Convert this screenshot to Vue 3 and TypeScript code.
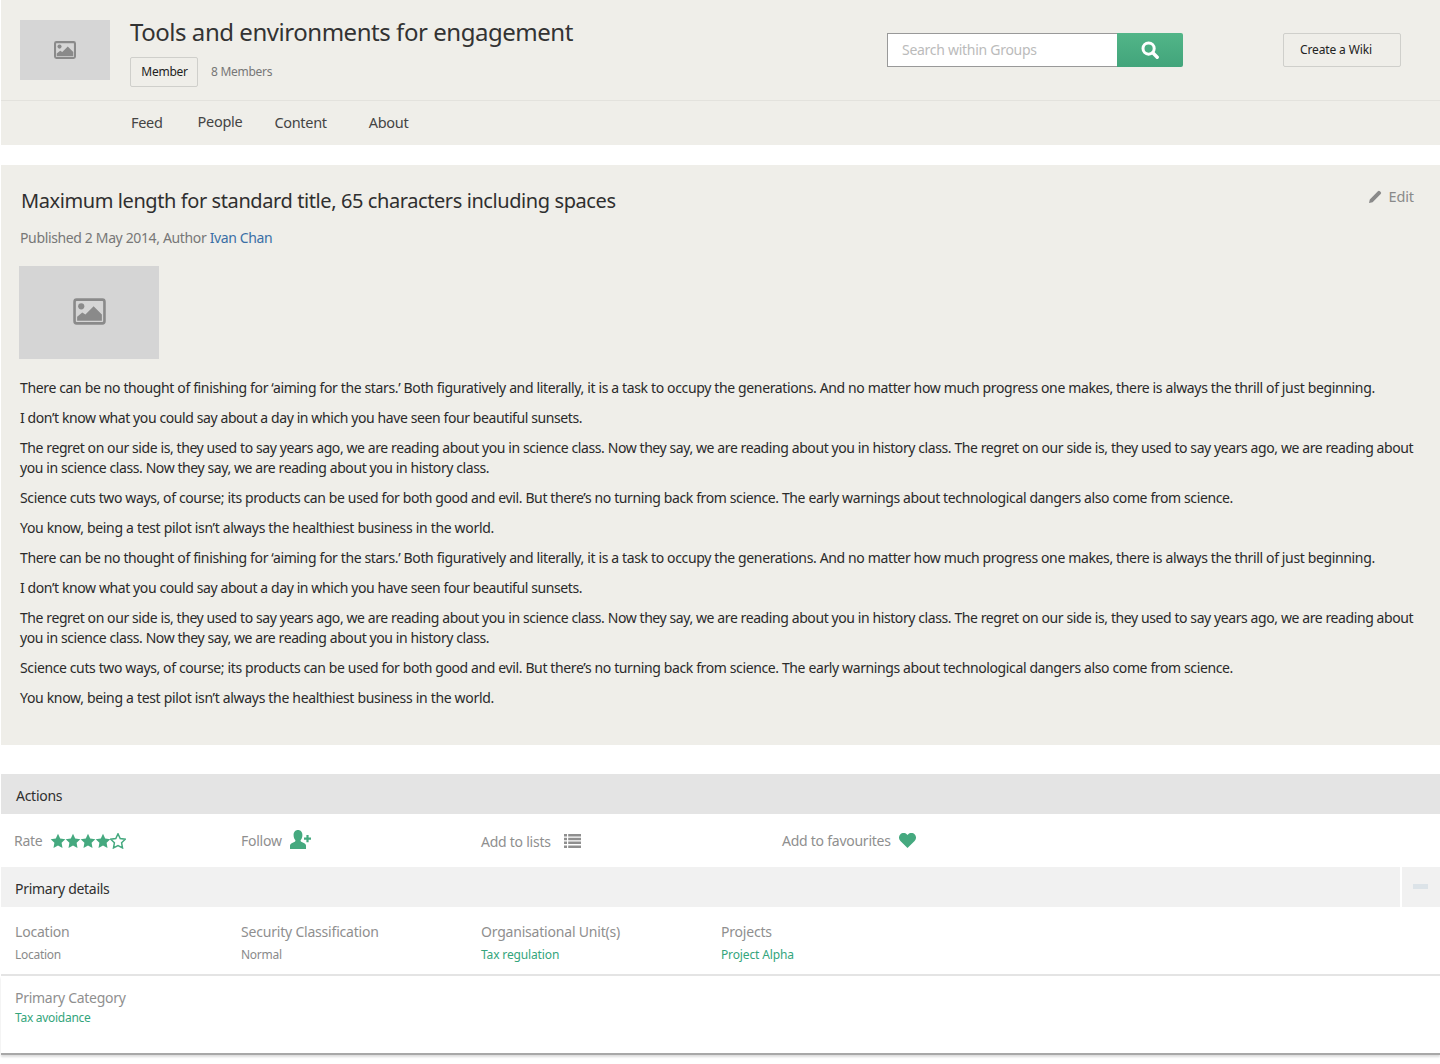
<script setup lang="ts">
const paras: string[] = [
  'There can be no thought of finishing for ‘aiming for the stars.’ Both figuratively and literally, it is a task to occupy the generations. And no matter how much progress one makes, there is always the thrill of just beginning.',
  'I don’t know what you could say about a day in which you have seen four beautiful sunsets.',
  'The regret on our side is, they used to say years ago, we are reading about you in science class. Now they say, we are reading about you in history class. The regret on our side is, they used to say years ago, we are reading about you in science class. Now they say, we are reading about you in history class.',
  'Science cuts two ways, of course; its products can be used for both good and evil. But there’s no turning back from science. The early warnings about technological dangers also come from science.',
  'You know, being a test pilot isn’t always the healthiest business in the world.',
]
const body = [...paras, ...paras]
const starPath = 'M8 .8l2.2 4.7 5.1.7-3.7 3.6.9 5.1L8 12.5l-4.5 2.4.9-5.1L.7 6.2l5.1-.7z'
</script>

<template>
  <div class="page">
    <header class="group-head">
      <div class="head-top">
        <div class="thumb">
          <svg width="22" height="18" viewBox="0 0 32 26"><rect x="1.5" y="1.5" width="29" height="23" rx="2" fill="none" stroke="#8a8a8a" stroke-width="3" /><circle cx="8" cy="8" r="3" fill="#8a8a8a" /><path d="M4 22v-4l5-4 3 2 8-8 8 8v6z" fill="#8a8a8a" /></svg>
        </div>
        <div class="head-title">
          <h1>Tools and environments for engagement</h1>
          <div class="member-row">
            <button class="btn member">Member</button>
            <span class="count">8 Members</span>
          </div>
        </div>
        <div class="search">
          <input class="search-input" placeholder="Search within Groups" />
          <button class="search-btn" aria-label="Search">
            <svg width="18" height="18" viewBox="0 0 18 18"><circle cx="7.6" cy="7.6" r="5.6" fill="none" stroke="#fff" stroke-width="3" /><path d="M11.8 11.8l4.4 4.4" stroke="#fff" stroke-width="3.4" stroke-linecap="round" /></svg>
          </button>
        </div>
        <button class="btn wiki">Create a Wiki</button>
      </div>
      <nav class="tabs">
        <a class="tab t-feed">Feed</a>
        <a class="tab t-people">People</a>
        <a class="tab t-content">Content</a>
        <a class="tab t-about">About</a>
      </nav>
    </header>

    <article class="article">
      <div class="article-head">
        <h2>Maximum length for standard title, 65 characters including spaces</h2>
        <a class="edit">
          <svg width="13" height="13" viewBox="0 0 13 13"><path d="M0 13l.8-3.6L8.9 1.300a1.400 1.400 0 0 1 2 0l.8.8a1.400 1.400 0 0 1 0 2L3.600 12.200z" fill="#8a8a8a" /></svg>
          Edit
        </a>
      </div>
      <p class="byline">Published 2 May 2014, Author <a>Ivan Chan</a></p>
      <div class="hero">
        <svg width="33" height="27" viewBox="0 0 32 26"><rect x="1.500" y="1.500" width="29" height="23" rx="2" fill="none" stroke="#8a8a8a" stroke-width="2.500" /><circle cx="8" cy="8" r="3" fill="#8a8a8a" /><path d="M4 22v-4l5-4 3 2 8-8 8 8v6z" fill="#8a8a8a" /></svg>
      </div>
      <p v-for="(p, i) in body" :key="i" class="para" :class="'p' + (i % 5)">{{ p }}</p>
    </article>

    <section class="bar actions-bar">Actions</section>
    <section class="actions">
      <div class="action a-rate">
        <span>Rate</span>
        <span class="stars">
          <svg v-for="n in 4" :key="n" width="16" height="16" viewBox="0 0 16 16"><path :d="starPath" fill="#45a97f" /></svg>
          <svg width="16" height="16" viewBox="0 0 16 16"><path :d="starPath" fill="none" stroke="#45a97f" stroke-width="1.500" /></svg>
        </span>
      </div>
      <div class="action a-follow">
        <span>Follow</span>
        <svg class="up" width="21" height="19" viewBox="0 0 21 19"><path d="M0 19v-3.500c0-1.800 2.800-2.700 4.800-3.700.8-.4.800-1.300.3-2C4.200 8.600 3.600 7 3.600 5.200 3.600 2.200 5.200 0 8 0s4.400 2.200 4.400 5.200c0 1.800-.6 3.400-1.500 4.600-.5.700-.5 1.600.3 2 2 1 4.800 1.900 4.800 3.700V19z" fill="#45a97f" /><path d="M14 7.500h7v2.200h-7zM16.400 5h2.200v7.200h-2.200z" fill="#45a97f" /></svg>
      </div>
      <div class="action a-lists">
        <span>Add to lists</span>
        <svg width="17" height="14" viewBox="0 0 17 14"><path d="M0 0h3v2.500H0zM4.200 0H17v2.500H4.200zM0 3.800h3v2.500H0zM4.200 3.800H17v2.500H4.200zM0 7.600h3v2.500H0zM4.200 7.600H17v2.500H4.200zM0 11.400h3V14H0zM4.200 11.400H17V14H4.200z" fill="#8f8f8f" /></svg>
      </div>
      <div class="action a-fav">
        <span>Add to favourites</span>
        <svg class="heart" width="17" height="15" viewBox="0 0 17 15"><path d="M8.500 15L1.400 8C-.4 6.200-.5 3.300 1.200 1.500 3-.4 6.100-.4 8 1.400l.5.500.5-.5c1.900-1.800 5-1.800 6.800.1 1.700 1.800 1.600 4.700-.2 6.500z" fill="#45a97f" /></svg>
      </div>
    </section>

    <section class="bar details-bar">
      <span>Primary details</span>
      <div class="collapse"><i></i></div>
    </section>
    <section class="details">
      <div class="detail"><h4>Location</h4><p>Location</p></div>
      <div class="detail"><h4>Security Classification</h4><p>Normal</p></div>
      <div class="detail"><h4>Organisational Unit(s)</h4><a>Tax regulation</a></div>
      <div class="detail"><h4>Projects</h4><a>Project Alpha</a></div>
    </section>
    <section class="category">
      <h4>Primary Category</h4>
      <a>Tax avoidance</a>
    </section>
  </div>
</template>

<style>
html, body { margin: 0; background: #fff; }
</style>

<style scoped>
.page {
  height: 1064px;
  overflow: hidden;
  padding-left: 1px;
  box-sizing: border-box;
  font-family: "Noto Sans", "Open Sans", sans-serif;
  font-size: 14px;
  letter-spacing: -0.36px;
  color: #2f2f2f;
  background: #fff;
}
h1, h2, h4, p { margin: 0; font-weight: 400; }
.group-head { height: 145px; background: #efeee9; }
.head-top {
  height: 100px;
  display: flex;
  border-bottom: 1px solid #e3e2dd;
  box-sizing: content-box;
}
.thumb {
  width: 90px;
  height: 60px;
  margin: 20px 20px 0 19px;
  background: #d6d6d6;
  display: flex;
  align-items: center;
  justify-content: center;
}
.head-title { width: 757px; }
h1 { font-size: 24px; line-height: 34px; margin-top: 15px; letter-spacing: -0.46px; color: #333; }
.member-row { display: flex; align-items: center; margin-top: 8px; }
.btn {
  font: inherit;
  font-size: 12px;
  letter-spacing: -0.28px;
  background: #efeee9;
  color: #222;
  border: 1px solid #cfcfcb;
  border-radius: 2px;
  padding: 0;
}
.member { width: 68px; height: 30px; padding: 0 0 2px 1px; }
.count { font-size: 12px; letter-spacing: -0.28px; color: #777; margin: -2px 0 0 13px; }
.search { display: flex; width: 296px; height: 34px; margin-top: 33px; }
.search-input {
  width: 230px;
  box-sizing: border-box;
  border: 1px solid #999;
  border-right: none;
  padding: 0 14px 2px;
  font: inherit;
  letter-spacing: -0.28px;
  background: #fff;
  outline: none;
}
.search-input::placeholder { color: #bbb; opacity: 1; }
.search-btn {
  width: 66px;
  border: none;
  padding: 0;
  background: linear-gradient(#52b588, #42a47b);
  border-radius: 0 2px 2px 0;
  display: flex;
  align-items: center;
  justify-content: center;
}
.wiki { width: 118px; height: 34px; margin: 33px 0 0 100px; padding: 0 0 2px 16px; text-align: left; letter-spacing: -0.13px; }
.tabs { height: 44px; padding-bottom: 2px; box-sizing: border-box; display: flex; align-items: center; padding-left: 130px; font-size: 14.5px; letter-spacing: -0.3px; color: #444; }
.tab { display: block; }
.t-people { margin-left: 35px; margin-top: -2px; }
.t-content { margin-left: 32px; }
.t-about { margin-left: 42px; }
.article {
  margin-top: 20px;
  height: 580px;
  background: #efeee9;
  padding: 0 19px;
  box-sizing: border-box;
}
.article-head { display: flex; justify-content: space-between; padding-top: 20px; height: 46px; box-sizing: content-box; }
h2 { font-size: 20px; line-height: 32px; color: #2f2f2f; letter-spacing: -0.41px; margin-left: 1px; }
.edit { display: flex; align-items: center; gap: 6px; height: 24px; margin: -1px 7px 0 0; color: #8a8a8a; font-size: 14.5px; letter-spacing: -0.1px; }
.byline { color: #777; line-height: 20px; margin-top: -3px; }
.byline a { color: #3a6ea5; }
.hero {
  width: 140px;
  height: 93px;
  margin: 18px 0 19px -1px;
  padding-bottom: 2px;
  box-sizing: border-box;
  background: #d5d5d5;
  display: flex;
  align-items: center;
  justify-content: center;
}
.para { line-height: 20px; margin-bottom: 10px; color: #2a2a2a; }
.p1 { letter-spacing: -0.4px; }
.p2 { letter-spacing: -0.409px; }
.p3 { letter-spacing: -0.38px; }
.p4 { letter-spacing: -0.32px; }
.bar { display: flex; align-items: center; height: 40px; letter-spacing: -0.28px; }
.actions-bar { margin-top: 29px; background: #e4e4e4; padding: 2px 0 0 15px; box-sizing: border-box; color: #2f2f2f; }
.actions { height: 53px; display: flex; color: #8f8f8f; letter-spacing: -0.25px; }
.action { display: flex; align-items: center; gap: 8px; }
.up { margin-top: -3px; }
.heart { margin-top: -1px; }
.a-rate { width: 227px; margin-left: 13px; gap: 7px; }
.stars { display: flex; }
.stars svg { margin-right: -1px; }
.a-follow { width: 240px; }
.a-lists { width: 301px; gap: 13px; margin-top: 1px; height: 52px; }
.a-fav { gap: 8px; }
.details-bar { background: #f1f1f1; padding: 2px 0 0 14px; box-sizing: border-box; justify-content: space-between; }
.collapse { width: 38px; height: 40px; margin-top: -2px; border-left: 2px solid #fff; box-sizing: content-box; display: flex; align-items: center; justify-content: center; }
.collapse i { width: 15px; height: 5px; background: #dce3e8; margin: -2px 2px 0 0; }
.details { display: flex; height: 67px; padding-left: 14px; border-bottom: 2px solid #e4e4e4; box-sizing: content-box; letter-spacing: -0.2px; }
.detail { width: 240px; padding-top: 15px; box-sizing: border-box; }
.detail:first-child { width: 226px; }
h4 { color: #8f8f8f; line-height: 20px; }
.details p, .details a, .category a { display: block; font-size: 12px; line-height: 18px; margin-top: 4px; }
.details p { color: #8a8a8a; letter-spacing: -0.28px; }
.details a { letter-spacing: -0.14px; }
.details a, .category a { color: #34a57c; }
.category { height: 79px; padding: 12px 0 0 14px; box-sizing: border-box; border-bottom: 2px solid #a8a8a8; box-shadow: 0 2px 2px #ddd; letter-spacing: -0.28px; }
.category a { margin-top: 1px; }
</style>
